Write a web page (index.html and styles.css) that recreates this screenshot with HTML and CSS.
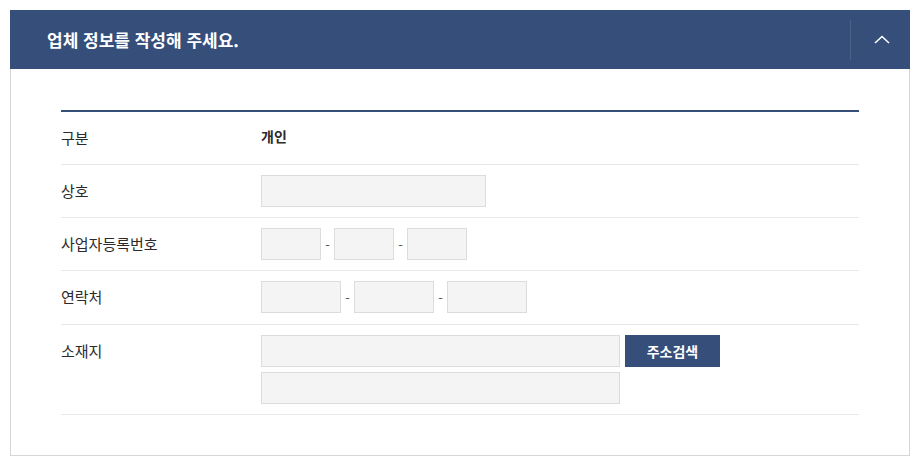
FILE: index.html
```html
<!DOCTYPE html>
<html lang="ko">
<head>
<meta charset="utf-8">
<title>업체 정보</title>
<link rel="stylesheet" href="styles.css">
</head>
<body>
<section class="panel">
  <header class="panel-head">
    <h2 class="panel-title">업체 정보를 작성해 주세요.</h2>
    <button class="toggle" type="button" aria-label="접기">
      <svg width="16" height="9" viewBox="0 0 16 9"><path d="M1 8 L8 1.5 L15 8" fill="none" stroke="#fff" stroke-width="1.6"/></svg>
    </button>
  </header>
  <div class="panel-body">
    <div class="form-table">
      <div class="row">
        <div class="label">구분</div>
        <div class="value value-text">개인</div>
      </div>
      <div class="row">
        <div class="label">상호</div>
        <div class="value"><input class="field w225" type="text"></div>
      </div>
      <div class="row">
        <div class="label">사업자등록번호</div>
        <div class="value">
          <input class="field w60" type="text"><span class="dash">-</span><input class="field w60" type="text"><span class="dash">-</span><input class="field w60" type="text">
        </div>
      </div>
      <div class="row row-tall">
        <div class="label">연락처</div>
        <div class="value">
          <input class="field w80" type="text"><span class="dash">-</span><input class="field w80" type="text"><span class="dash">-</span><input class="field w80" type="text">
        </div>
      </div>
      <div class="row">
        <div class="label">소재지</div>
        <div class="value value-stack">
          <div class="line"><input class="field w359" type="text"><button class="btn" type="button">주소검색</button></div>
          <div class="line"><input class="field w359" type="text"></div>
        </div>
      </div>
    </div>
  </div>
</section>
</body>
</html>
```
FILE: styles.css
```css
* { box-sizing: border-box; }
html, body { margin: 0; padding: 0; background: #fff; }
body {
  padding: 10px 12px 10px 10px;
  font-family: "Noto Sans CJK KR", "Noto Sans", sans-serif;
  color: #333;
}
.panel {
  width: 900px;
  border: 1px solid #d6d6d6;
  border-top: none;
}
.panel-head {
  height: 59px;
  margin: 0 -1px;
  background: #354e7a;
  display: flex;
  align-items: center;
  justify-content: space-between;
}
.panel-title {
  margin: 0 0 0 37px;
  font-size: 17px;
  font-weight: 700;
  color: #fff;
}
.toggle {
  width: 60px;
  height: 40px;
  border: none;
  border-left: 1px solid #4b628b;
  background: transparent;
  padding: 0 0 0 2px;
  display: flex;
  align-items: center;
  justify-content: center;
  cursor: pointer;
}
.panel-body {
  padding: 41px 50px 40px 50px;
}
.form-table {
  border-top: 2px solid #354e7a;
}
.row {
  display: flex;
  border-bottom: 1px solid #e8e8e8;
  padding: 10px 0;
  min-height: 53px;
}
.row-tall { padding-bottom: 11px; }
.label {
  width: 200px;
  flex: none;
  font-size: 15px;
  line-height: 32px;
  color: #2b2b2b;
}
.value {
  display: flex;
  align-items: center;
  font-size: 14px;
}
.value-text {
  font-weight: 600;
  color: #2b2b2b;
  line-height: 28px;
  align-items: flex-start;
}
.value-stack {
  flex-direction: column;
  align-items: flex-start;
  gap: 5px;
}
.line { display: flex; gap: 5px; }
.field {
  height: 32px;
  border: 1px solid #dcdcdc;
  background: #f4f4f4;
  padding: 0 8px;
  margin: 0;
  font: inherit;
}
.w225 { width: 225px; }
.w60 { width: 60px; }
.w80 { width: 80px; }
.w359 { width: 359px; }
.dash {
  width: 13px;
  text-align: center;
  font-size: 13px;
  color: #555;
}
.btn {
  width: 95px;
  height: 32px;
  border: none;
  background: #354e7a;
  color: #fff;
  font: inherit;
  font-size: 14px;
  font-weight: 700;
  padding: 0;
  cursor: pointer;
}
```
